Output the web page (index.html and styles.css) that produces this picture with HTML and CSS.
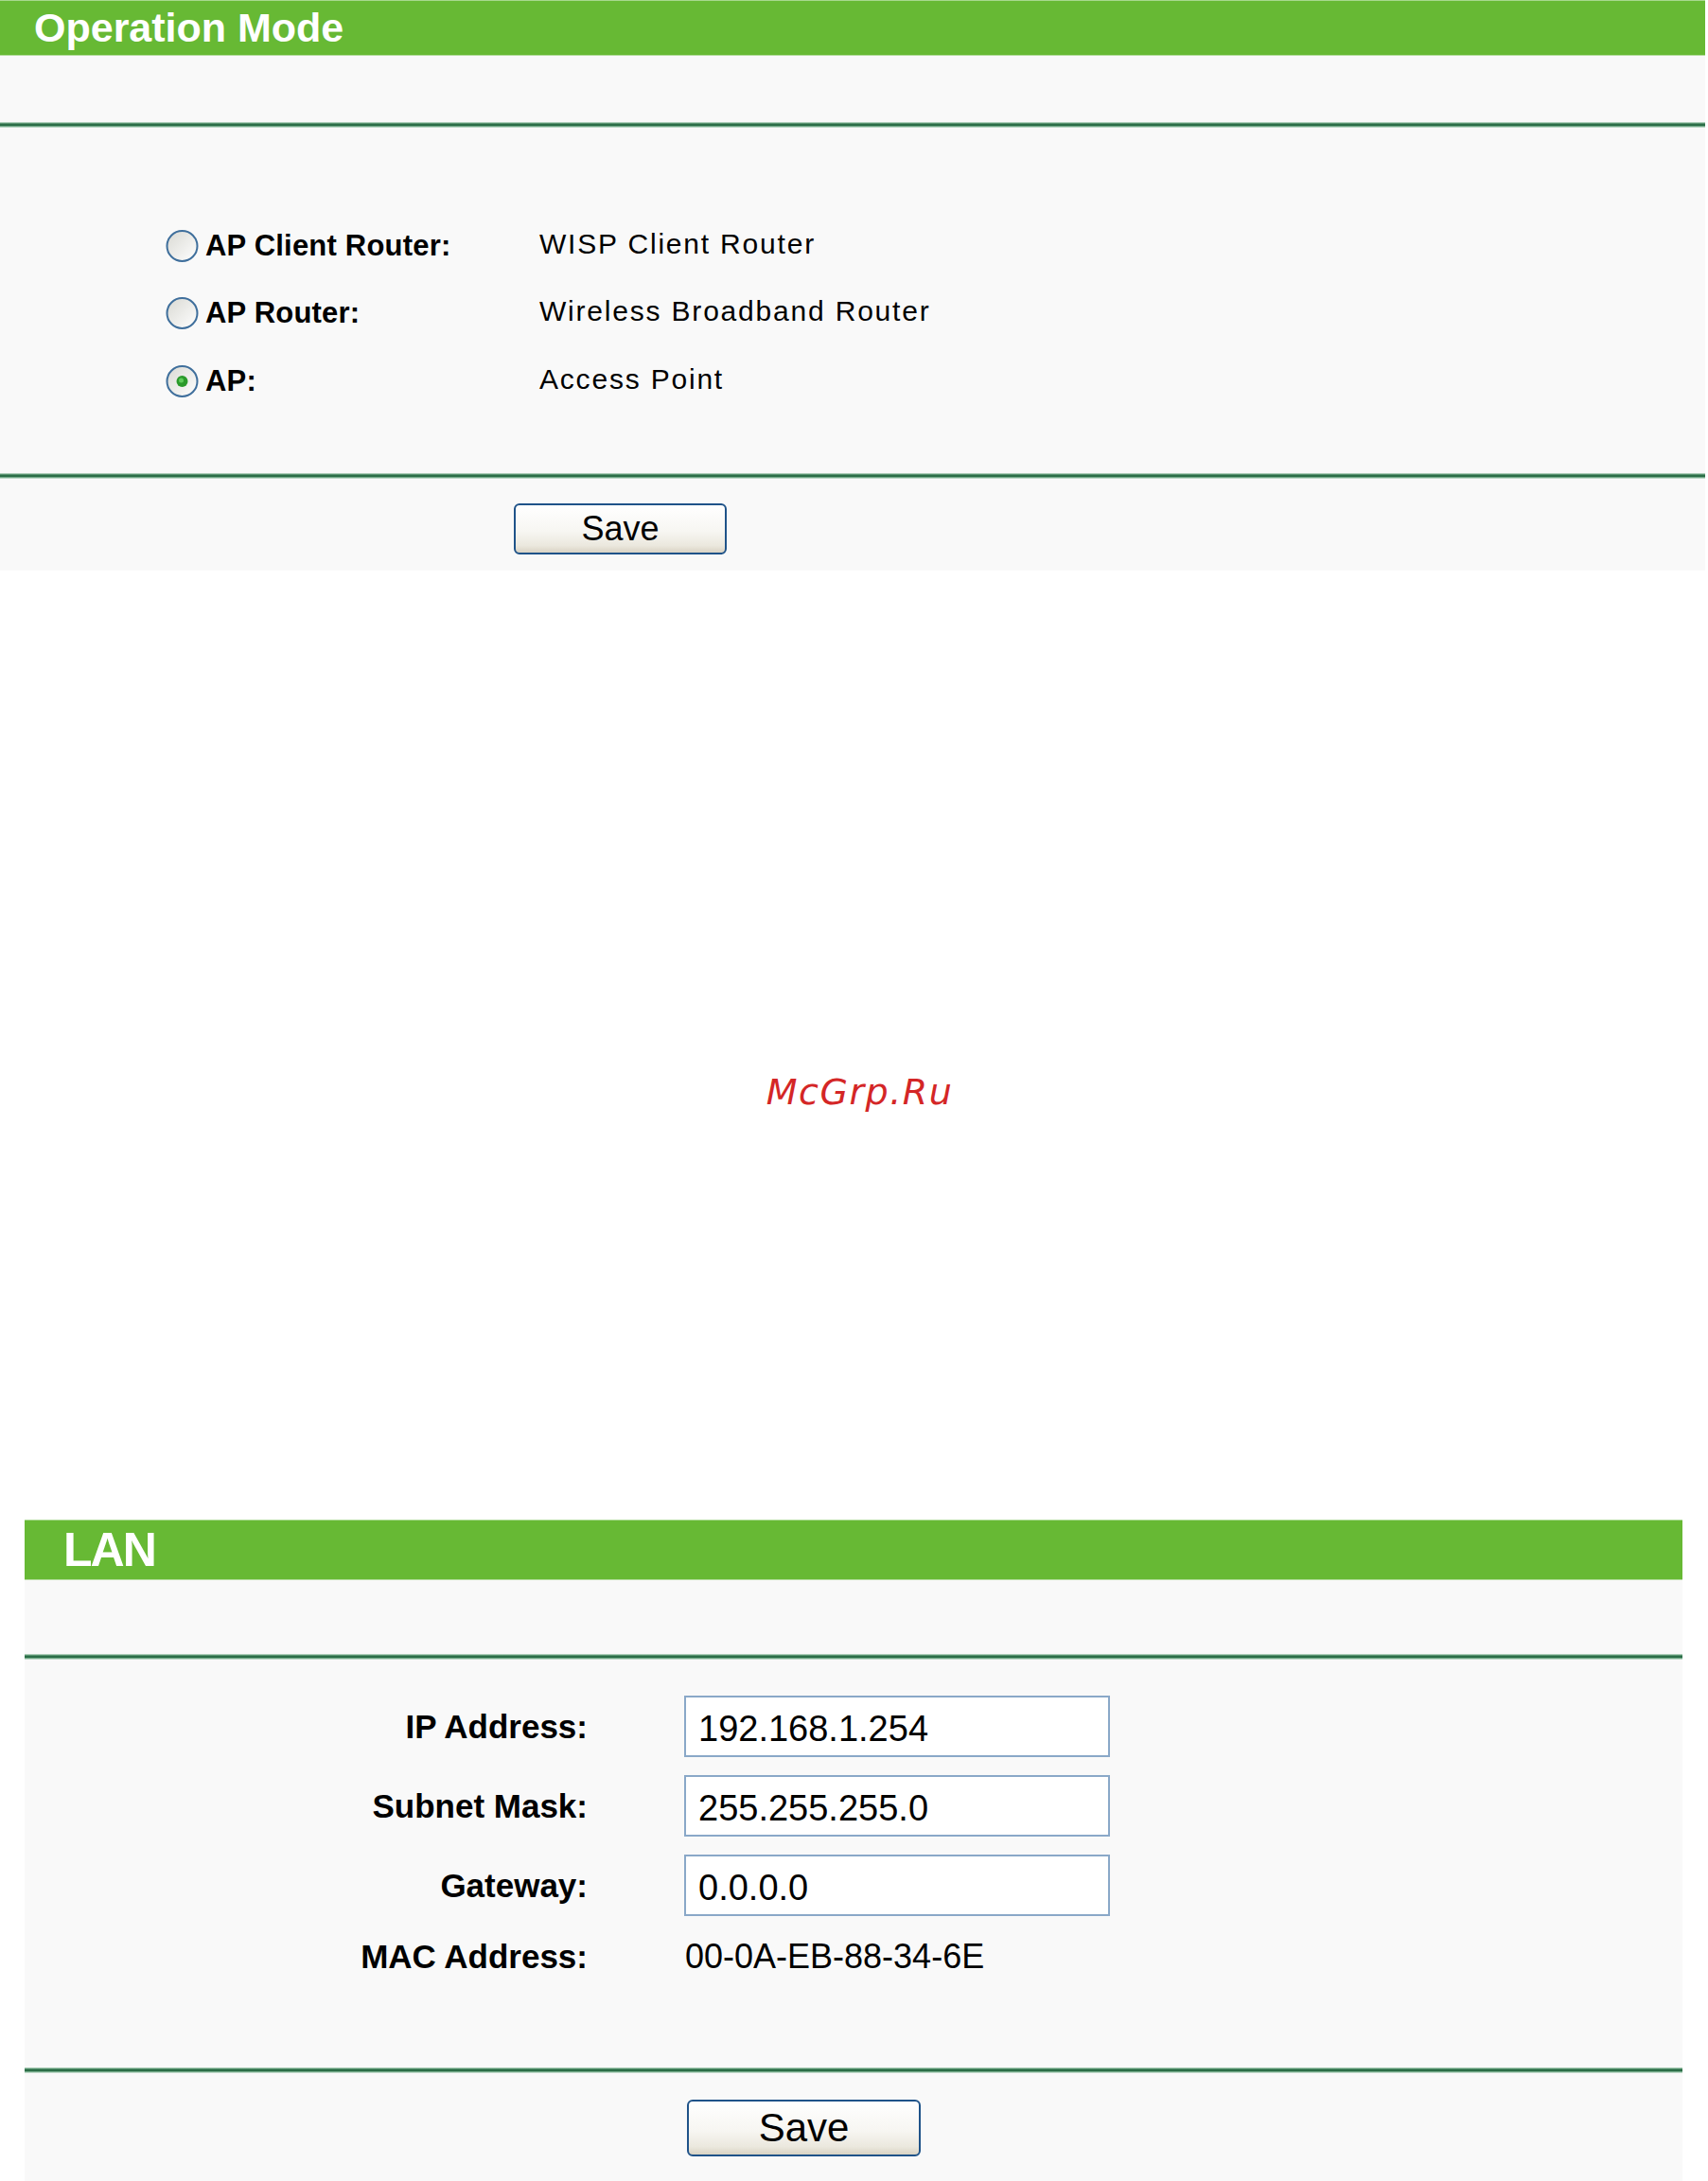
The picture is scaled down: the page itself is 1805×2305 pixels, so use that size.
FILE: index.html
```html
<!DOCTYPE html>
<html lang="en">
<head>
<meta charset="utf-8">
<title>Operation Mode / LAN</title>
<link rel="stylesheet" href="styles.css">
</head>
<body>
<section class="panel panel-op">
  <h1 class="panel-title">Operation Mode</h1>
  <div class="panel-gap"></div>
  <div class="rule"></div>
  <div class="panel-body op-body">
    <ul class="mode-list">
      <li class="mode-row">
        <svg class="radio" viewBox="0 0 37 36" aria-hidden="true">
          <defs>
            <linearGradient id="rfill" x1="0" y1="0" x2="1" y2="1">
              <stop offset="0" stop-color="#d9d9d3"/>
              <stop offset="1" stop-color="#ffffff"/>
            </linearGradient>
          </defs>
          <circle cx="18.5" cy="18" r="16" fill="url(#rfill)" stroke="#3f6f9c" stroke-width="2"/>
        </svg>
        <span class="mode-name">AP Client Router:</span>
        <span class="mode-desc">WISP Client Router</span>
      </li>
      <li class="mode-row">
        <svg class="radio" viewBox="0 0 37 36" aria-hidden="true">
          <circle cx="18.5" cy="18" r="16" fill="url(#rfill)" stroke="#3f6f9c" stroke-width="2"/>
        </svg>
        <span class="mode-name">AP Router:</span>
        <span class="mode-desc">Wireless Broadband Router</span>
      </li>
      <li class="mode-row">
        <svg class="radio" viewBox="0 0 37 36" aria-hidden="true">
          <circle cx="18.5" cy="18" r="16" fill="url(#rfill)" stroke="#3f6f9c" stroke-width="2"/>
          <circle cx="18.5" cy="18" r="6" fill="#2a9a2a"/>
          <circle cx="17.5" cy="17" r="2.5" fill="#5fcc5a"/>
        </svg>
        <span class="mode-name">AP:</span>
        <span class="mode-desc">Access Point</span>
      </li>
    </ul>
  </div>
  <div class="rule"></div>
  <div class="panel-foot op-foot">
    <button class="btn btn-op" type="button">Save</button>
  </div>
</section>

<div class="spacer">
  <span class="watermark">McGrp.Ru</span>
</div>

<section class="panel panel-lan">
  <h1 class="panel-title lan-title">LAN</h1>
  <div class="panel-gap lan-gap"></div>
  <div class="rule"></div>
  <div class="panel-body lan-body">
    <div class="field">
      <span class="field-label">IP Address:</span>
      <input class="field-input" type="text" value="192.168.1.254">
    </div>
    <div class="field">
      <span class="field-label">Subnet Mask:</span>
      <input class="field-input" type="text" value="255.255.255.0">
    </div>
    <div class="field">
      <span class="field-label">Gateway:</span>
      <input class="field-input" type="text" value="0.0.0.0">
    </div>
    <div class="field field-static">
      <span class="field-label">MAC Address:</span>
      <span class="field-value">00-0A-EB-88-34-6E</span>
    </div>
  </div>
  <div class="rule"></div>
  <div class="panel-foot lan-foot">
    <button class="btn btn-lan" type="button">Save</button>
  </div>
</section>
</body>
</html>
```

FILE: styles.css
```css
* {
  box-sizing: border-box;
}

html, body {
  margin: 0;
  padding: 0;
  background: #ffffff;
}

body {
  width: 1805px;
  font-family: "Liberation Sans", Arial, sans-serif;
  color: #000;
}

/* ---------- panels ---------- */
.panel {
  background: #f9f9f9;
}

.panel-op {
  width: 1802px;
}

.panel-lan {
  width: 1752px;
  margin-left: 26px;
  height: 699px;
}

.panel-title {
  margin: 0;
  height: 58px;
  line-height: 57px;
  padding-left: 36px;
  background: #67b934;
  border-top: 1px solid #a8d88e;
  box-shadow: 0 1px 0 #b5dd9f;
  color: #fff;
  font-size: 43px;
  font-weight: bold;
}

.lan-title {
  height: 63px;
  line-height: 62px;
  padding-left: 41px;
  font-size: 50px;
  letter-spacing: -2px;
}

.panel-gap {
  height: 71px;
}

.lan-gap {
  height: 79px;
}

/* dark green divider with soft edges */
.rule {
  height: 6px;
  background: linear-gradient(
    #d6e8dc 0,
    #7fb192 17%,
    #2b6e47 34%,
    #2b6e47 60%,
    #82b596 78%,
    #e4efe8 100%
  );
}

/* ---------- operation mode list ---------- */
.op-body {
  height: 365px;
  padding-top: 89px;
}

.mode-list {
  list-style: none;
  margin: 0;
  padding: 0 0 0 174px;
}

.mode-row {
  display: grid;
  grid-template-columns: 43px 353px auto;
  align-items: center;
  height: 71.5px;
}

.radio {
  width: 37px;
  height: 36px;
  display: block;
}

.mode-name {
  font-size: 31px;
  font-weight: bold;
  letter-spacing: 0.2px;
}

.mode-desc {
  font-size: 30px;
  letter-spacing: 1.8px;
  position: relative;
  top: -2px;
}

.panel-foot {
  display: flex;
}

.op-foot {
  height: 97px;
  padding: 26px 0 0 543px;
}

/* ---------- buttons ---------- */
.btn {
  font-family: "Liberation Sans", Arial, sans-serif;
  color: #000;
  border: 2px solid #1f5389;
  border-radius: 6px;
  background: linear-gradient(#ffffff 0, #f7f6f2 55%, #ebe8de 85%, #d9d3c4 100%);
  padding: 0;
  cursor: pointer;
}

.btn-op {
  width: 225px;
  height: 54px;
  font-size: 36px;
}

.btn-lan {
  width: 247px;
  height: 60px;
  font-size: 42px;
}

/* ---------- watermark gap ---------- */
.spacer {
  height: 1003px;
  padding-top: 532px;
  padding-left: 12px;
  display: flex;
  justify-content: center;
  align-items: flex-start;
}

.watermark {
  font-family: "DejaVu Sans", sans-serif;
  font-style: oblique;
  font-size: 38px;
  line-height: 38px;
  letter-spacing: 1.5px;
  color: #d42626;
}

/* ---------- LAN form ---------- */
.lan-body {
  height: 431px;
  padding-top: 38px;
  display: flex;
  flex-direction: column;
  gap: 19px;
}

.field {
  display: grid;
  grid-template-columns: 595px 450px;
  column-gap: 102px;
  align-items: center;
  height: 65px;
}

.field-static {
  height: 48px;
}

.field-label {
  text-align: right;
  font-size: 35px;
  font-weight: bold;
}

.field-input {
  width: 450px;
  height: 65px;
  margin: 0;
  border: 2px solid #8aa8c8;
  background: #fff;
  padding: 6px 0 0 13px;
  font-family: "Liberation Sans", Arial, sans-serif;
  font-size: 38px;
  color: #000;
  outline: none;
}

.field-value {
  font-size: 36px;
  margin-left: 1px;
}

.lan-foot {
  padding: 28px 0 0 700px;
}
```
